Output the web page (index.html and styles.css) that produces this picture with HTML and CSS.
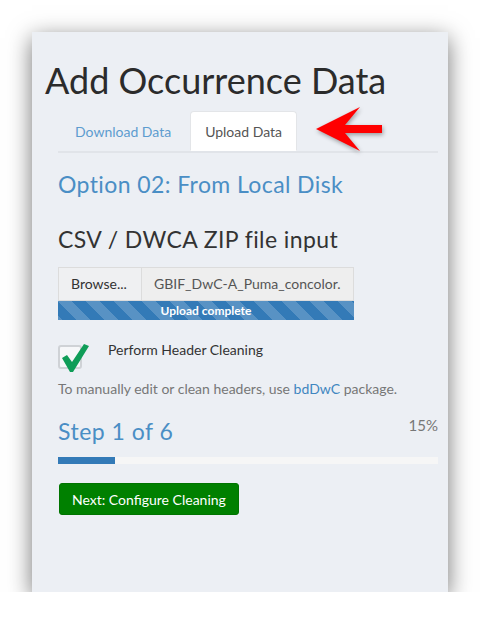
FILE: index.html
```html
<!DOCTYPE html>
<html>
<head>
<meta charset="utf-8">
<link rel="stylesheet" href="styles.css">
</head>
<body>
<div class="panel">
  <h1 class="title">Add Occurrence Data</h1>
  <div class="content">
    <div class="tabs-wrap">
      <ul class="tabs">
        <li class="tab"><span class="tab-link">Download Data</span></li>
        <li class="tab active"><span class="tab-link">Upload Data</span></li>
      </ul>
      <svg class="arrow" width="80" height="52" viewBox="0 0 80 52">
        <polygon points="4,24 48,2 33,20 70,20 70,28 33,28 48,46" fill="#ff0000"/>
      </svg>
    </div>
    <h3 class="option">Option 02: From Local Disk</h3>
    <h3 class="subhead">CSV / DWCA ZIP file input</h3>
    <div class="file-input">
      <div class="file-row">
        <span class="browse">Browse...</span>
        <span class="filename">GBIF_DwC-A_Puma_concolor.</span>
      </div>
      <div class="upload-bar">Upload complete</div>
    </div>
    <div class="check-row">
      <span class="checkbox">
        <svg class="check" width="30" height="30" viewBox="0 0 30 30">
          <path d="M2,15 L7,12 L12,19 L24,1 L29,3 L13,29 L10,29 Z" fill="#0f9d58"/>
        </svg>
      </span>
      <span class="check-label">Perform Header Cleaning</span>
    </div>
    <p class="help">To manually edit or clean headers, use <span class="link">bdDwC</span> package.</p>
    <div class="step-row">
      <h3 class="step">Step 1 of 6</h3>
      <span class="pct">15%</span>
    </div>
    <div class="progress"><div class="progress-fill" style="width:15%"></div></div>
    <button class="next">Next: Configure Cleaning</button>
  </div>
</div>
</body>
</html>
```
FILE: styles.css
```css
html, body {
  margin: 0;
  padding: 0;
  background: #ffffff;
}
body {
  padding: 32px 0 0 32px;
  font-family: "Lato", "Open Sans", sans-serif;
  color: #333333;
}
.panel {
  width: 416px;
  height: 560px;
  box-sizing: border-box;
  background: #eceff4;
  box-shadow: 0 6px 22px rgba(0, 0, 0, 0.55);
  padding: 0 10px 0 13px;
}
.title {
  margin: 0;
  padding-top: 28px;
  font-size: 36px;
  font-weight: 400;
  line-height: 40px;
  color: #2b2b2b;
}
.content {
  margin-left: 13px;
}
.tabs-wrap {
  position: relative;
  margin-top: 11px;
}
.tabs {
  list-style: none;
  margin: 0;
  padding: 0;
  display: flex;
  border-bottom: 2px solid #e1e4e9;
  height: 40px;
}
.tab {
  margin-right: 2px;
  margin-bottom: -2px;
}
.tab-link {
  display: block;
  height: 40px;
  box-sizing: border-box;
  padding: 10px 16px;
  font-size: 14px;
  line-height: 20px;
  color: #5d9ccf;
  border: 1px solid transparent;
  border-radius: 4px 4px 0 0;
}
.tab.active .tab-link {
  background: #ffffff;
  color: #555555;
  border-color: #e3e5e8;
  border-bottom-color: #ffffff;
  padding: 10px 14px;
}
.arrow {
  position: absolute;
  left: 254px;
  top: -6px;
  filter: drop-shadow(1px 2px 2px rgba(0, 0, 0, 0.35));
}
.option {
  margin: 18px 0 0;
  font-size: 23px;
  letter-spacing: 0.4px;
  font-weight: 400;
  line-height: 26px;
  color: #4a8ec5;
}
.subhead {
  margin: 29px 0 0;
  font-size: 23px;
  letter-spacing: 0.4px;
  font-weight: 400;
  line-height: 26px;
  color: #333333;
}
.file-input {
  margin-top: 15px;
  width: 296px;
}
.file-row {
  display: flex;
  height: 34px;
}
.browse {
  box-sizing: border-box;
  width: 83px;
  border: 1px solid #dcdcdc;
  border-right: none;
  background: #eff0f2;
  font-size: 14px;
  line-height: 32px;
  padding-left: 12px;
  color: #333333;
}
.filename {
  flex: 1;
  box-sizing: border-box;
  border: 1px solid #dcdcdc;
  background: #eeeeee;
  font-size: 14px;
  line-height: 32px;
  padding-left: 12px;
  padding-right: 4px;
  color: #555555;
  white-space: nowrap;
  overflow: hidden;
}
.upload-bar {
  height: 19px;
  background-color: #337ab7;
  background-image: linear-gradient(45deg, rgba(255,255,255,.18) 25%, transparent 25%, transparent 50%, rgba(255,255,255,.18) 50%, rgba(255,255,255,.18) 75%, transparent 75%, transparent);
  background-size: 28px 28px;
  color: #ffffff;
  font-size: 12px;
  font-weight: 700;
  line-height: 19px;
  text-align: center;
}
.check-row {
  display: flex;
  align-items: flex-start;
  margin-top: 25px;
  height: 28px;
}
.checkbox {
  position: relative;
  box-sizing: border-box;
  width: 24px;
  height: 24px;
  border: 2px solid #cfd2d6;
  border-radius: 3px;
  background: #f6f7f9;
}
.check {
  position: absolute;
  left: 0;
  top: -4px;
}
.check-label {
  margin-left: 26px;
  font-size: 14px;
  line-height: 16px;
  color: #333333;
  margin-top: -3px;
}
.help {
  margin: 7px 0 0;
  font-size: 14px;
  line-height: 18px;
  color: #777777;
}
.link {
  color: #3f86c0;
}
.step-row {
  display: flex;
  justify-content: space-between;
  align-items: flex-start;
  margin-top: 18px;
}
.step {
  margin: 0;
  font-size: 23px;
  letter-spacing: 0.5px;
  font-weight: 400;
  line-height: 30px;
  color: #4a8ec5;
}
.pct {
  font-size: 15px;
  line-height: 18px;
  color: #777777;
}
.progress {
  margin-top: 11px;
  height: 7px;
  background: #f6f6f6;
}
.progress-fill {
  height: 100%;
  background: #337ab7;
}
.next {
  margin-top: 19px;
  margin-left: 1px;
  height: 32px;
  padding: 0 12px;
  border: 1px solid #007400;
  border-radius: 3px;
  background: #008000;
  color: #ffffff;
  font-family: "Lato", "Open Sans", sans-serif;
  font-size: 14px;
}
```
